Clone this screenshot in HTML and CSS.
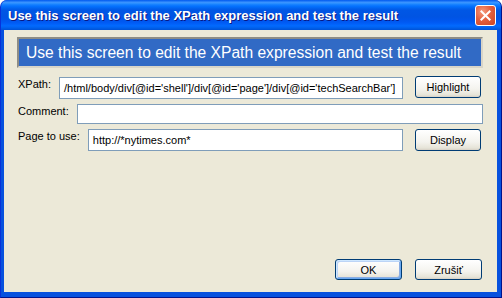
FILE: index.html
```html
<!DOCTYPE html>
<html>
<head>
<meta charset="utf-8">
<link rel="stylesheet" href="styles.css">
</head>
<body>
<div class="window">
  <div class="titlebar">
    <span class="title">Use this screen to edit the XPath expression and test the result</span>
    <span class="close"><svg width="21" height="21" viewBox="0 0 21 21"><path d="M6 6 L15 15 M15 6 L6 15" stroke="#fff" stroke-width="2.2" stroke-linecap="square"/></svg></span>
  </div>
  <div class="client">
    <div class="banner">Use this screen to edit the XPath expression and test the result</div>
    <div class="row row-xpath">
      <span class="label">XPath:</span>
      <div class="field field-tall">/html/body/div[@id='shell']/div[@id='page']/div[@id='techSearchBar']</div>
      <span class="btn btn-side">Highlight</span>
    </div>
    <div class="row row-comment">
      <span class="label">Comment:</span>
      <div class="field field-short"></div>
    </div>
    <div class="row row-page">
      <span class="label">Page to use:</span>
      <div class="field field-tall">http://*nytimes.com*</div>
      <span class="btn btn-side">Display</span>
    </div>
    <div class="footer">
      <span class="btn btn-foot btn-default">OK</span>
      <span class="btn btn-foot">Zrušiť</span>
    </div>
  </div>
</div>
</body>
</html>
```
FILE: styles.css
```css
* { box-sizing: border-box; }
html, body { margin: 0; padding: 0; }
body {
  width: 502px;
  height: 298px;
  overflow: hidden;
  font-family: "Liberation Sans", Arial, sans-serif;
  font-size: 11px;
  color: #000;
  background: #fff;
}
.window {
  width: 502px;
  height: 298px;
  display: flex;
  flex-direction: column;
  background: #0751DE;
  border-radius: 7px 7px 0 0;
  border-left: 1px solid #0831D9;
  border-right: 1px solid #00138C;
  border-bottom: 1px solid #00138C;
}
.titlebar {
  height: 30px;
  flex: none;
  display: flex;
  align-items: center;
  justify-content: space-between;
  padding: 0 5px 0 7px;
  border-radius: 7px 7px 0 0;
  background: linear-gradient(to bottom, #0058EE 0%, #3A93FF 8%, #288EFF 12%, #127DFF 16%, #036FFC 22%, #0262EE 28%, #0057E5 34%, #0054E3 56%, #0055EB 66%, #005BF5 76%, #026AFE 86%, #0062EF 92%, #0052D6 100%);
}
.title {
  color: #fff;
  font-weight: bold;
  font-size: 13px;
  font-family: "Liberation Sans", Arial, sans-serif;
  letter-spacing: 0;
  text-shadow: 1px 1px 0 #0A1883;
  padding-top: 1px;
}
.close {
  width: 21px;
  height: 21px;
  border: 1px solid #fff;
  border-radius: 3px;
  background: radial-gradient(circle at 35% 30%, #F59B7E 0%, #E4603F 45%, #CC4423 100%);
  display: flex;
  align-items: center;
  justify-content: center;
  margin-top: 1px;
}
.close svg { display: block; width: 19px; height: 19px; }
.client {
  flex: 1;
  margin: 0 4px 5px 3px;
  background: #ECE9D8;
  display: flex;
  flex-direction: column;
  padding: 7px 14px 12px 14px;
}
.banner {
  height: 31px;
  flex: none;
  margin-left: -1px;
  background: #316AC5;
  color: #fff;
  font-size: 15.6px;
  line-height: 27px;
  padding-left: 7px;
  border: 2px solid;
  border-color: #8E8D86 #D8D5C8 #D8D5C8 #8E8D86;
  white-space: nowrap;
  overflow: hidden;
}
.row {
  display: flex;
  align-items: flex-start;
}
.row-xpath { margin-top: 8px; }
.row-comment { margin-top: 5px; }
.row-page { margin-top: 5px; }
.label {
  flex: none;
  margin-right: 8px;
  padding-top: 1px;
}
.row-xpath .label { padding-top: 2px; }
.field {
  flex: 1;
  background: #fff;
  border: 1px solid #7F9DB9;
  padding-left: 4px;
  white-space: nowrap;
  overflow: hidden;
}
.field-tall {
  height: 22px;
  line-height: 20px;
  margin-top: 1px;
}
.row-page .field-tall { margin-top: 0; }
.field-short { height: 20px; }
.btn {
  flex: none;
  display: flex;
  align-items: center;
  justify-content: center;
  border: 1px solid #003C74;
  border-radius: 3px;
  background: linear-gradient(to bottom, #FFFFFF 0%, #F4F3EE 60%, #E6E4D8 90%, #D6D0C5 100%);
  font-size: 11px;
  color: #000;
}
.btn-side {
  width: 66px;
  height: 22px;
  margin-left: 12px;
  margin-right: 2px;
}
.footer {
  margin-top: auto;
  display: flex;
  justify-content: flex-end;
  gap: 13px;
  padding-right: 1px;
}
.btn-foot {
  width: 67px;
  height: 21px;
}
.btn-default {
  box-shadow: inset 1px 1px 0 #CEE7FF, inset -1px -1px 0 #69A8F0, inset 2px 2px 0 #BCD4F6, inset -2px -2px 0 #89ADE4;
}
```
